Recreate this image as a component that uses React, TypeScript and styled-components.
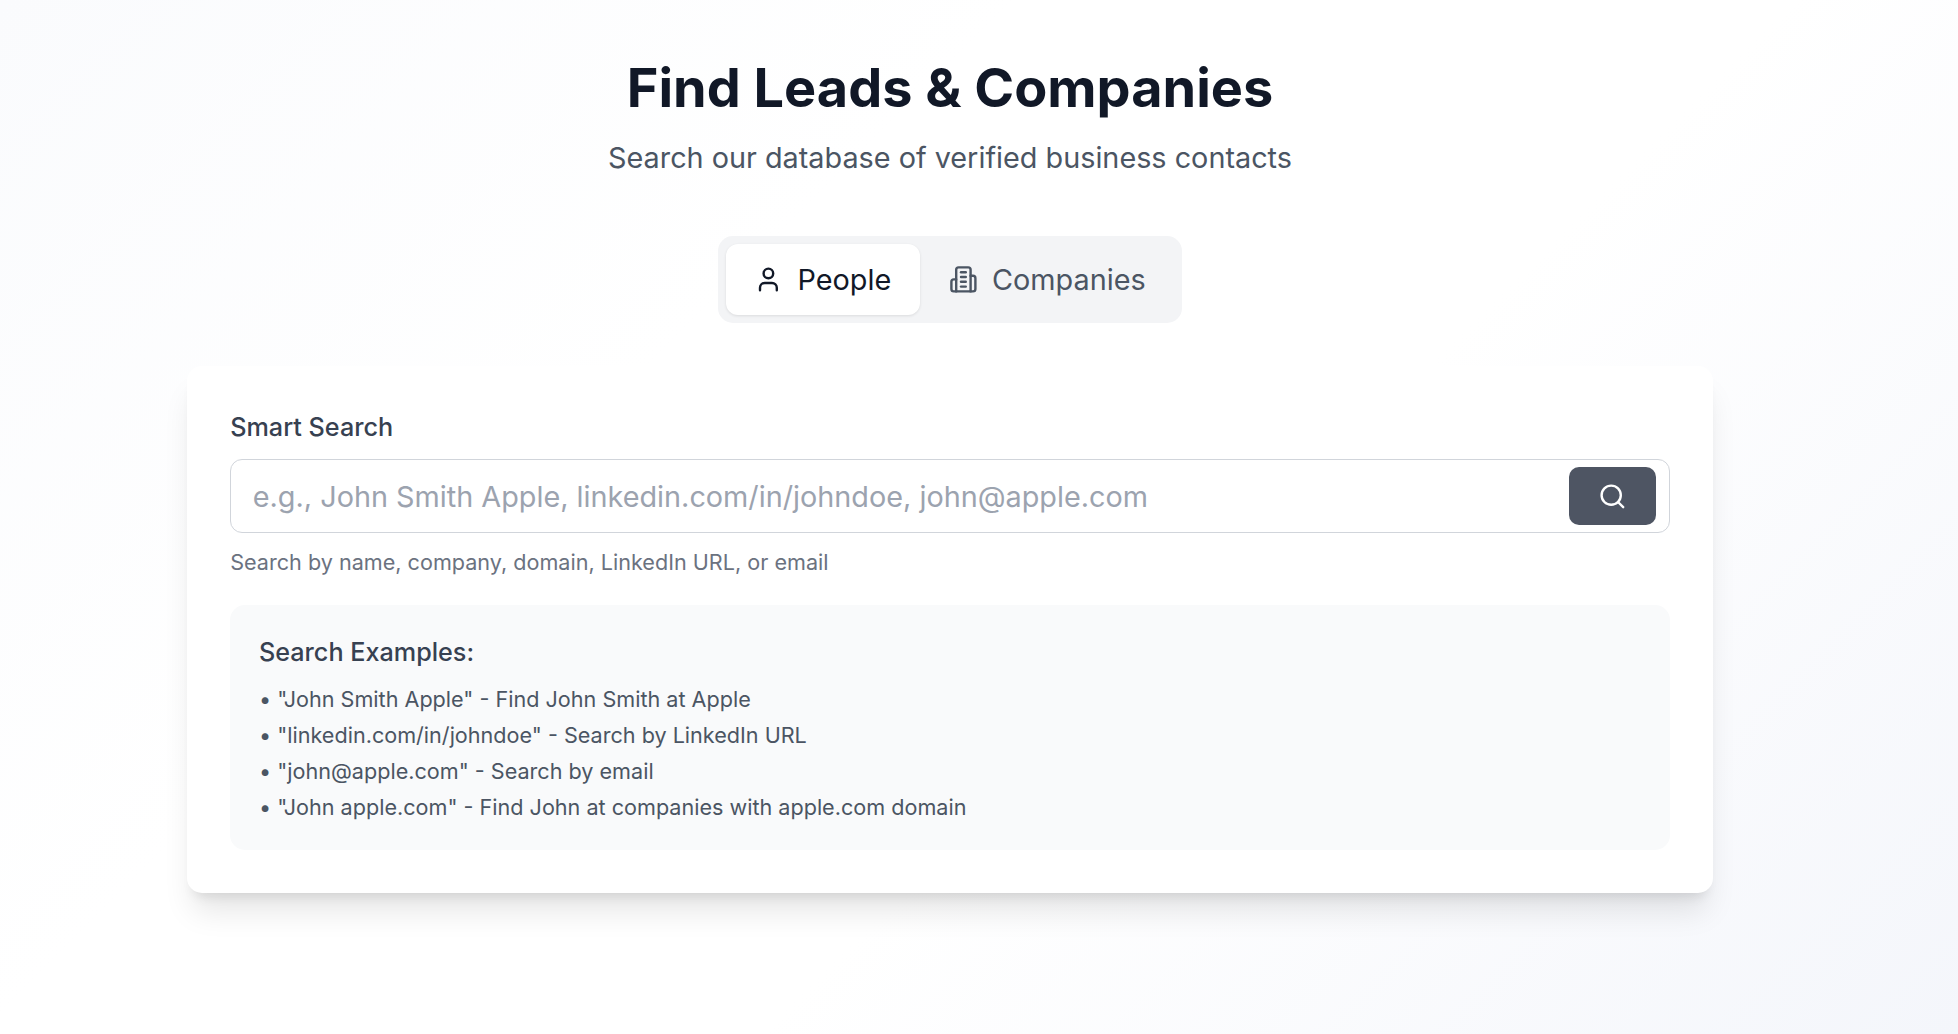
import React, { FC, useState } from "react";
import styled, { createGlobalStyle } from "styled-components";
import { Search, User } from "lucide-react";

type TabKey = "people" | "companies";

const examples = [
  '"John Smith Apple" - Find John Smith at Apple',
  '"linkedin.com/in/johndoe" - Search by LinkedIn URL',
  '"john@apple.com" - Search by email',
  '"John apple.com" - Find John at companies with apple.com domain',
];

const BuildingIcon: FC = () => (
  <svg
    width="28.8"
    height="28.8"
    viewBox="0 0 24 24"
    fill="none"
    stroke="currentColor"
    strokeWidth="2"
    strokeLinecap="round"
    strokeLinejoin="round"
  >
    <path d="M6 22V4a2 2 0 0 1 2-2h8a2 2 0 0 1 2 2v18Z" />
    <path d="M6 12H4a2 2 0 0 0-2 2v6a2 2 0 0 0 2 2h2" />
    <path d="M18 9h2a2 2 0 0 1 2 2v9a2 2 0 0 1-2 2h-2" />
    <path d="M10 6h4" />
    <path d="M10 10h4" />
    <path d="M10 14h4" />
    <path d="M10 18h4" />
  </svg>
);

const App: FC = () => {
  const [tab, setTab] = useState<TabKey>("people");
  const [query, setQuery] = useState("");

  return (
    <Page>
      <GlobalStyle />
      <Main>
        <Header>
          <Title>Find Leads &amp; Companies</Title>
          <Subtitle>Search our database of verified business contacts</Subtitle>
        </Header>
        <TabsRow>
          <Tabs>
            <Tab $active={tab === "people"} onClick={() => setTab("people")}>
              <User size={28.8} strokeWidth={2} />
              People
            </Tab>
            <Tab $active={tab === "companies"} onClick={() => setTab("companies")}>
              <BuildingIcon />
              Companies
            </Tab>
          </Tabs>
        </TabsRow>
        <Card>
          <Label htmlFor="smart-search">Smart Search</Label>
          <SearchBox>
            <SearchInput
              id="smart-search"
              value={query}
              onChange={(e) => setQuery(e.target.value)}
              placeholder="e.g., John Smith Apple, linkedin.com/in/johndoe, john@apple.com"
            />
            <SearchButton aria-label="Search">
              <Search size={28.8} strokeWidth={2} />
            </SearchButton>
          </SearchBox>
          <Hint>Search by name, company, domain, LinkedIn URL, or email</Hint>
          <Examples>
            <ExamplesTitle>Search Examples:</ExamplesTitle>
            <ExampleList>
              {examples.map((item) => (
                <li key={item}>• {item}</li>
              ))}
            </ExampleList>
          </Examples>
        </Card>
      </Main>
    </Page>
  );
};

export default App;

const GlobalStyle = createGlobalStyle`
  * {
    box-sizing: border-box;
  }
  body {
    margin: 0;
    font-family: Inter, "Liberation Sans", sans-serif;
  }
`;

const Page = styled.div`
  min-height: 100vh;
  background: linear-gradient(135deg, #fafbfd 0%, #ffffff 34%, #ffffff 60%, #f4f6fb 100%);
`;

const Main = styled.main`
  width: 1900px;
  padding: 50px 187px 0;
`;

const Header = styled.header`
  text-align: center;
  margin-bottom: 60.5px;
`;

const Title = styled.h1`
  margin: 0 0 13.5px;
  font-size: 54px;
  line-height: 75px;
  font-weight: 700;
  color: #111827;
`;

const Subtitle = styled.p`
  margin: 0;
  font-size: 28.8px;
  line-height: 37px;
  color: #4b5563;
`;

const TabsRow = styled.div`
  display: flex;
  justify-content: center;
  margin-bottom: 43px;
`;

const Tabs = styled.div`
  display: flex;
  padding: 8px;
  border-radius: 15px;
  background: #f3f4f6;
`;

const Tab = styled.button<{ $active: boolean }>`
  display: flex;
  align-items: center;
  gap: 14.4px;
  height: 71px;
  padding: 0 28.8px;
  border: 0;
  border-radius: 12px;
  font-family: inherit;
  font-size: 28.8px;
  font-weight: 400;
  cursor: pointer;
  color: ${(p) => (p.$active ? "#111827" : "#4b5563")};
  background: ${(p) => (p.$active ? "#ffffff" : "transparent")};
  box-shadow: ${(p) => (p.$active ? "0 1px 3px rgba(0, 0, 0, 0.1)" : "none")};
`;

const Card = styled.section`
  padding: 43.2px;
  border-radius: 15px;
  background: #ffffff;
  box-shadow: 0 24px 30px -6px rgba(0, 0, 0, 0.1), 0 10px 12px -7px rgba(0, 0, 0, 0.1);
`;

const Label = styled.label`
  display: block;
  margin-bottom: 14px;
  font-size: 25.2px;
  line-height: 36px;
  font-weight: 500;
  color: #374151;
`;

const SearchBox = styled.div`
  display: flex;
  align-items: center;
  height: 74px;
  padding: 0 13px 0 21.6px;
  border: 1px solid #d1d5db;
  border-radius: 12px;
  background: #ffffff;
`;

const SearchInput = styled.input`
  flex: 1;
  min-width: 0;
  border: 0;
  outline: 0;
  padding: 0;
  background: transparent;
  font-family: inherit;
  font-size: 28.8px;
  color: #111827;
  &::placeholder {
    color: #9ca3af;
  }
`;

const SearchButton = styled.button`
  display: flex;
  align-items: center;
  justify-content: center;
  width: 87px;
  height: 58px;
  border: 0;
  border-radius: 10px;
  color: #ffffff;
  background: #4e5563;
  cursor: pointer;
`;

const Hint = styled.p`
  margin: 11px 0 0;
  font-size: 21.6px;
  line-height: 36px;
  color: #6b7280;
`;

const Examples = styled.div`
  margin-top: 25px;
  padding: 29px 28.8px 25.4px;
  border-radius: 15px;
  background: #f9fafb;
`;

const ExamplesTitle = styled.h3`
  margin: 0 0 10.4px;
  font-size: 25.2px;
  line-height: 36px;
  font-weight: 500;
  color: #374151;
`;

const ExampleList = styled.ul`
  margin: 0;
  padding: 0;
  list-style: none;
  font-size: 21.6px;
  line-height: 36px;
  color: #4b5563;
`;
